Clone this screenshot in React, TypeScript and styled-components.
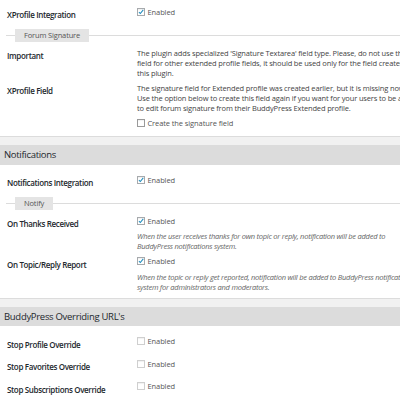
import styled, { createGlobalStyle } from 'styled-components';

const GlobalStyle = createGlobalStyle`
  html, body {
    margin: 0;
    padding: 0;
    background: #f1f1f1;
    overflow: hidden;
  }

  body {
    font-family: "Open Sans", "Noto Sans", sans-serif;
    color: #444;
  }
`;

const StyledPage = styled.div`
  width: 400px;
  overflow: hidden;
`;

const StyledSection = styled.section<{ $first?: boolean }>`
  margin-top: ${({ $first }) => ($first ? 0 : 8)}px;
`;

const StyledHeader = styled.h2`
  margin: 0;
  height: 19.5px;
  padding-left: 4px;
  background: #dcdcdc;
  font-size: 9.5px;
  font-weight: 400;
  line-height: 19.5px;
  letter-spacing: -0.3px;
  color: #23282d;
  white-space: nowrap;
`;

const StyledPanel = styled.div<{ $top: number; $bottom: number }>`
  padding-top: ${({ $top }) => $top}px;
  padding-bottom: ${({ $bottom }) => $bottom}px;
  background: #fff;
  border-bottom: 1px solid #dcdcdc;
`;

const StyledRow = styled.div<{ $tall?: boolean }>`
  display: grid;
  grid-template-columns: 137px 1fr;
  align-items: start;
  padding-top: 2.5px;
  padding-bottom: ${({ $tall }) => ($tall ? 10 : 2.5)}px;
`;

const StyledLabel = styled.div`
  padding-top: 3.5px;
  padding-left: 7px;
  margin-bottom: -3.5px;
  font-size: 8px;
  font-weight: 600;
  line-height: 10px;
  letter-spacing: -0.35px;
  color: #23282d;
  white-space: nowrap;
`;

const StyledCell = styled.div`
  display: flex;
  flex-direction: column;
  gap: 5.5px;
  min-width: 0;
`;

const StyledText = styled.div<{ $italic?: boolean }>`
  font-size: 7.5px;
  line-height: 10px;
  white-space: nowrap;
  font-style: ${({ $italic }) => ($italic ? 'italic' : 'normal')};
  letter-spacing: ${({ $italic }) => ($italic ? -0.25 : -0.15)}px;
  color: ${({ $italic }) => ($italic ? '#666' : '#444')};
`;

const StyledCheckLine = styled.label`
  display: flex;
  align-items: center;
  gap: 2.5px;
  height: 10px;
  font-size: 7.5px;
  letter-spacing: -0.1px;
  color: #555;
  white-space: nowrap;
`;

const StyledBox = styled.span<{ $tone: 'checked' | 'dark' | 'light' }>`
  display: flex;
  align-items: center;
  justify-content: center;
  box-sizing: border-box;
  width: 8px;
  height: 8px;
  background: #fff;
  border: 1px solid
    ${({ $tone }) => ({ checked: '#a7aaad', dark: '#9a9a9a', light: '#cfcfcf' }[$tone])};
  box-shadow: inset 0 1px 1px rgba(0, 0, 0, 0.06);
`;

const StyledTabGroup = styled.div`
  display: flex;
  align-items: center;
  padding: 10px 0 3px 6px;
`;

const StyledRule = styled.span<{ $grow?: boolean }>`
  flex: ${({ $grow }) => ($grow ? '1 1 auto' : '0 0 9px')};
  height: 1px;
  background: #dcdcdc;
`;

const StyledTab = styled.span`
  height: 13px;
  padding: 0 9px;
  background: #e4e4e4;
  font-size: 7.5px;
  line-height: 13px;
  letter-spacing: -0.15px;
  color: #555;
  white-space: nowrap;
`;

const Check = ({ checked, tone, children }: { checked?: boolean; tone?: 'dark' | 'light'; children: string }) => (
  <StyledCheckLine>
    <StyledBox $tone={checked ? 'checked' : tone ?? 'dark'}>
      {checked && (
        <svg width="8" height="8" viewBox="0 0 8 8">
          <path d="M1.2 4.1 L3.1 6 L7 1.2" fill="none" stroke="#1e8cbe" strokeWidth="1.4" />
        </svg>
      )}
    </StyledBox>
    {children}
  </StyledCheckLine>
);

const TabGroup = ({ title }: { title: string }) => (
  <StyledTabGroup>
    <StyledRule />
    <StyledTab>{title}</StyledTab>
    <StyledRule $grow />
  </StyledTabGroup>
);

export default function App() {
  return (
    <StyledPage>
      <GlobalStyle />

      <StyledSection $first>
        <StyledPanel $top={4} $bottom={5.5}>
          <StyledRow>
            <StyledLabel>XProfile Integration</StyledLabel>
            <StyledCell>
              <Check checked>Enabled</Check>
            </StyledCell>
          </StyledRow>

          <TabGroup title="Forum Signature" />

          <StyledRow>
            <StyledLabel>Important</StyledLabel>
            <StyledCell>
              <div>
                <StyledText>The plugin adds specialized 'Signature Textarea' field type. Please, do not use this</StyledText>
                <StyledText>field for other extended profile fields, it should be used only for the field created by</StyledText>
                <StyledText>this plugin.</StyledText>
              </div>
            </StyledCell>
          </StyledRow>

          <StyledRow>
            <StyledLabel>XProfile Field</StyledLabel>
            <StyledCell>
              <div>
                <StyledText>The signature field for Extended profile was created earlier, but it is missing now.</StyledText>
                <StyledText>Use the option below to create this field again if you want for your users to be able</StyledText>
                <StyledText>to edit forum signature from their BuddyPress Extended profile.</StyledText>
              </div>
              <Check tone="dark">Create the signature field</Check>
            </StyledCell>
          </StyledRow>
        </StyledPanel>
      </StyledSection>

      <StyledSection>
        <StyledHeader>Notifications</StyledHeader>
        <StyledPanel $top={7.5} $bottom={3.5}>
          <StyledRow>
            <StyledLabel>Notifications Integration</StyledLabel>
            <StyledCell>
              <Check checked>Enabled</Check>
            </StyledCell>
          </StyledRow>

          <TabGroup title="Notify" />

          <StyledRow>
            <StyledLabel>On Thanks Received</StyledLabel>
            <StyledCell>
              <Check checked>Enabled</Check>
              <div>
                <StyledText $italic>When the user receives thanks for own topic or reply, notification will be added to</StyledText>
                <StyledText $italic>BuddyPress notifications system.</StyledText>
              </div>
            </StyledCell>
          </StyledRow>

          <StyledRow>
            <StyledLabel>On Topic/Reply Report</StyledLabel>
            <StyledCell>
              <Check checked>Enabled</Check>
              <div>
                <StyledText $italic>When the topic or reply get reported, notification will be added to BuddyPress notifications</StyledText>
                <StyledText $italic>system for administrators and moderators.</StyledText>
              </div>
            </StyledCell>
          </StyledRow>
        </StyledPanel>
      </StyledSection>

      <StyledSection>
        <StyledHeader>BuddyPress Overriding URL's</StyledHeader>
        <StyledPanel $top={7.5} $bottom={5}>
          <StyledRow $tall>
            <StyledLabel>Stop Profile Override</StyledLabel>
            <StyledCell>
              <Check tone="light">Enabled</Check>
            </StyledCell>
          </StyledRow>
          <StyledRow $tall>
            <StyledLabel>Stop Favorites Override</StyledLabel>
            <StyledCell>
              <Check tone="light">Enabled</Check>
            </StyledCell>
          </StyledRow>
          <StyledRow $tall>
            <StyledLabel>Stop Subscriptions Override</StyledLabel>
            <StyledCell>
              <Check tone="light">Enabled</Check>
            </StyledCell>
          </StyledRow>
        </StyledPanel>
      </StyledSection>
    </StyledPage>
  );
}
